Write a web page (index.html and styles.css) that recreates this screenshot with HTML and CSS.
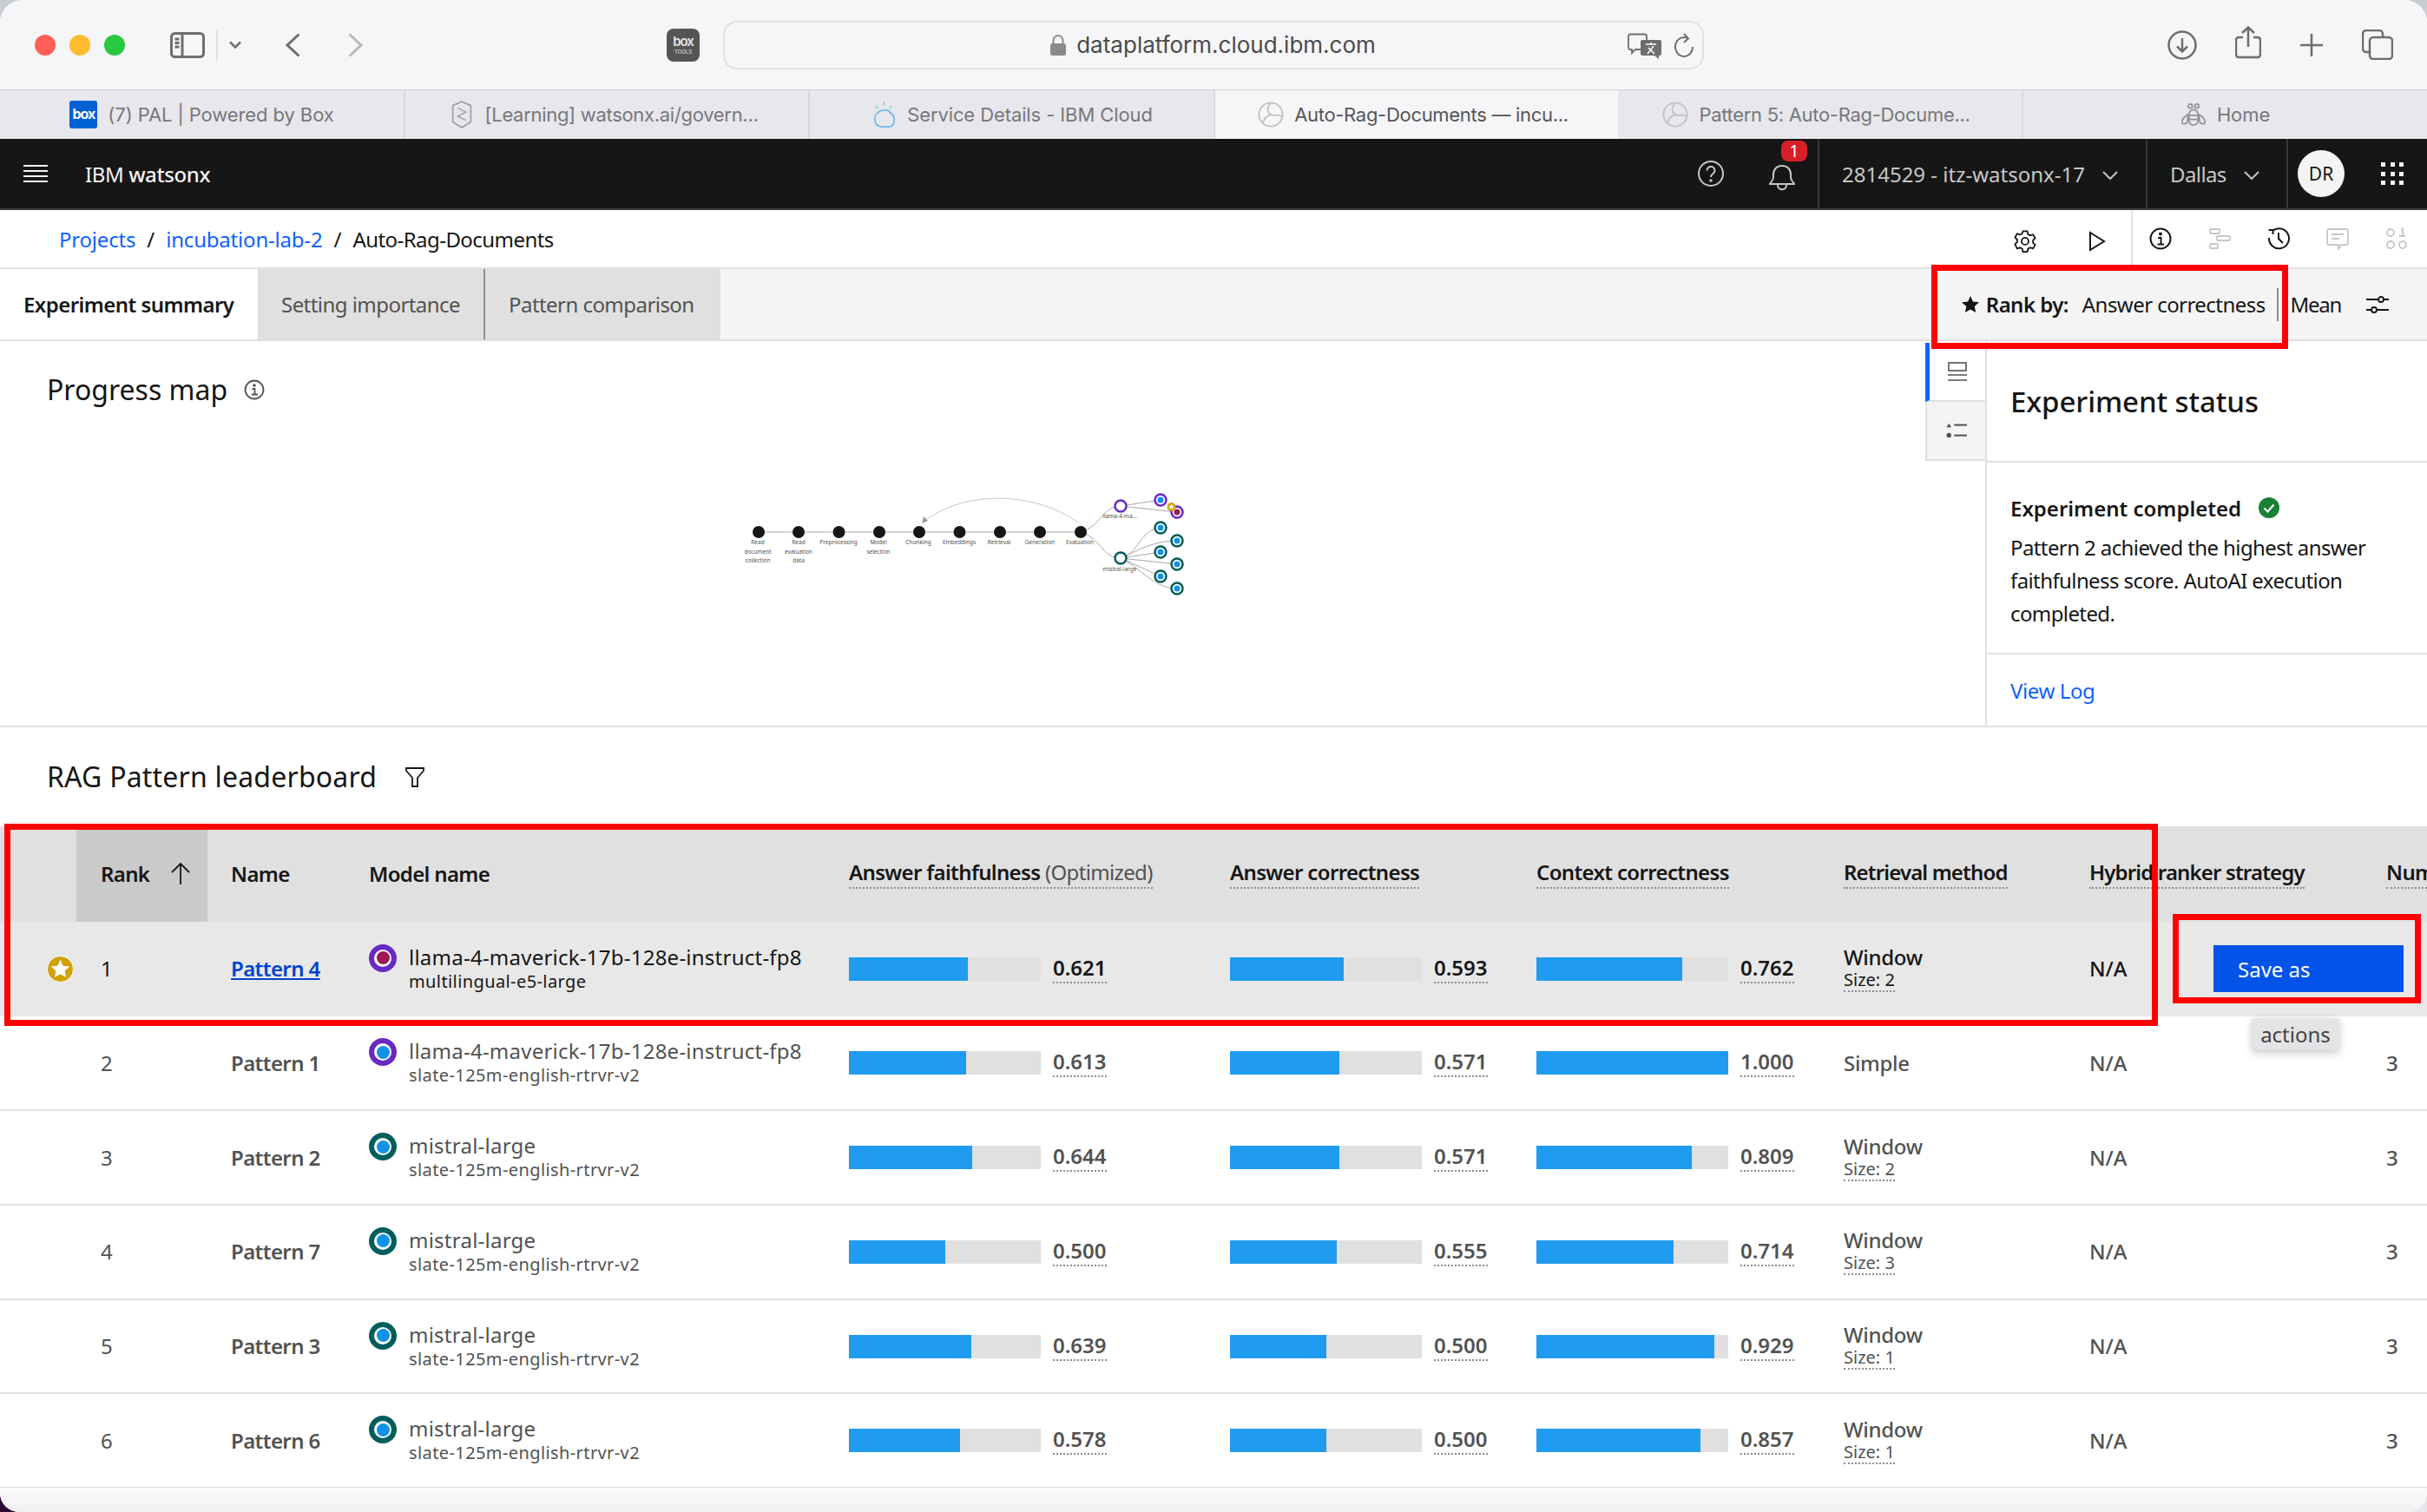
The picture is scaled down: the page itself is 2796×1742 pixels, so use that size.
FILE: index.html
```html
<!DOCTYPE html>
<html lang="en">
<head>
    <meta charset="UTF-8">
    <title>Auto-Rag-Documents</title>
    <link rel="stylesheet" href="styles.css">
</head>
<body>
<div class="window">
    <!-- browser toolbar -->
    <div class="toolbar">
        <div class="lights"><i class="red"></i><i class="amber"></i><i class="green"></i></div>
        <svg class="ic-sidebar" viewBox="0 0 40 30" fill="none" stroke="#6e6e70" stroke-width="3"><rect x="1.5" y="1.5" width="37" height="27" rx="4"/><path d="M14 2v26M5.5 8h5M5.5 12.500h5M5.500 17h5"/></svg>
        <div class="tool-sep"></div>
        <svg class="ic-drop" viewBox="0 0 14 10" fill="none" stroke="#6e6e70" stroke-width="2.500"><path d="M1 1.500l6 6 6-6"/></svg>
        <svg class="ic-back" viewBox="0 0 17 28" fill="none" stroke="#6e6e70" stroke-width="3"><path d="M15.500 1.500L2 14l13.500 12.500"/></svg>
        <svg class="ic-fwd" viewBox="0 0 17 28" fill="none" stroke="#b9b9bb" stroke-width="3"><path d="M1.500 1.500L15 14 1.500 26.500"/></svg>
        <div class="boxtools"><b>box</b><span>TOOLS</span></div>
        <div class="urlbar">
            <svg class="ic-lock" viewBox="0 0 20 24"><path d="M4.500 10V6.500a5.500 5.500 0 0 1 11 0V10" fill="none" stroke="#8a8a8c" stroke-width="2"/><rect x="1" y="10" width="18" height="14" rx="2.500" fill="#8a8a8c"/></svg>
            <span class="url">dataplatform.cloud.ibm.com</span>
            <svg class="ic-translate" viewBox="0 0 40 30"><path d="M3 1.500h17a2 2 0 0 1 2 2V17a2 2 0 0 1-2 2H9l-4 4v-4H3a2 2 0 0 1-2-2V3.500a2 2 0 0 1 2-2z" fill="#f6f6f8" stroke="#6e6e70" stroke-width="1.800"/><path d="M17 8h20a2 2 0 0 1 2 2v14a2 2 0 0 1-2 2h-1v4l-5-4H17a2 2 0 0 1-2-2V10a2 2 0 0 1 2-2z" fill="#6e6e70"/><path d="M21 13h12M27 11v2M23 24l7-9M31 24l-7-7" stroke="#fff" stroke-width="1.500" fill="none"/></svg>
            <svg class="ic-reload" viewBox="0 0 24 30" fill="none" stroke="#6e6e70" stroke-width="2"><path d="M17 6.500A10 11 0 1 0 22 16"/><path d="M12 1l5 5.500L12 11"/></svg>
        </div>
        <div class="tool-right">
            <svg class="ic-tool" viewBox="0 0 34 34" fill="none" stroke="#6e6e70" stroke-width="2.500"><circle cx="17" cy="17" r="15.500"/><path d="M17 9v15M11 18.500l6 6 6-6"/></svg>
            <svg class="ic-share" viewBox="0 0 30 38" fill="none" stroke="#6e6e70" stroke-width="2.500"><path d="M9 13H4a3 3 0 0 0-3 3v17a3 3 0 0 0 3 3h22a3 3 0 0 0 3-3V16a3 3 0 0 0-3-3h-5"/><path d="M15 24V2M8 8l7-6.500L22 8"/></svg>
            <svg class="ic-plus" viewBox="0 0 28 28" fill="none" stroke="#6e6e70" stroke-width="2.500"><path d="M14 1v26M1 14h26"/></svg>
            <svg class="ic-tabs" viewBox="0 0 36 35" fill="none" stroke="#6e6e70" stroke-width="2.500"><path d="M8 26H5a4 4 0 0 1-4-4V5a4 4 0 0 1 4-4h15a4 4 0 0 1 4 4v3"/><rect x="9" y="9" width="26" height="25" rx="4"/></svg>
        </div>
    </div>

    <!-- browser tabs -->
    <div class="tabstrip">
        <div class="btab"><span class="fav-box">box</span>(7) PAL | Powered by Box</div>
        <div class="btab tight">
            <svg class="fav" viewBox="0 0 26 34" fill="none" stroke="#9aa0a6" stroke-width="1.800"><path d="M13 1l11 5v20l-11 7-11-7V6z"/><path d="M8 9l10 5-10 5 10 5" stroke-width="1.500"/></svg>
            [Learning] watsonx.ai/govern...</div>
        <div class="btab">
            <svg class="fav" viewBox="0 0 32 34" fill="none" stroke="#6fb6ee" stroke-width="1.800"><path d="M10 14c-7 3-7 18 4 18h8c9 0 9-14 2-17-1-3-4-4-7-3-2-1-5 0-7 2z" /><path d="M16 1v5M6 6l3 4M26 6l-3 4" stroke="#7fdcdc"/></svg>
            Service Details - IBM Cloud</div>
        <div class="btab active tight">
            <svg class="fav" viewBox="0 0 32 32" fill="none" stroke="#c2c2c4" stroke-width="2"><circle cx="16" cy="16" r="14.500"/><path d="M16 2c-6 6-4 11 0 14M30 18c-8-3-12 0-14-2M6 27c2-7 6-10 10-11" /></svg>
            Auto-Rag-Documents — incu...</div>
        <div class="btab tight">
            <svg class="fav" viewBox="0 0 32 32" fill="none" stroke="#c2c2c4" stroke-width="2"><circle cx="16" cy="16" r="14.500"/><path d="M16 2c-6 6-4 11 0 14M30 18c-8-3-12 0-14-2M6 27c2-7 6-10 10-11" /></svg>
            Pattern 5: Auto-Rag-Docume...</div>
        <div class="btab">
            <svg class="fav" viewBox="0 0 32 28" fill="none" stroke="#8d929c" stroke-width="1.800"><circle cx="12" cy="3.500" r="2.500"/><circle cx="20" cy="3.500" r="2.500"/><rect x="10.500" y="8" width="11" height="19" rx="5.500"/><path d="M11 15h10M11 20h10M9 14c-4 2-7 6-7 9 0 3 4 3 6 1 1-3 1-7 1-10zM23 14c4 2 7 6 7 9 0 3-4 3-6 1-1-3-1-7-1-10z"/></svg>
            Home</div>
    </div>

    <!-- product header -->
    <header class="topbar">
        <svg class="ic-menu" viewBox="0 0 28 22" fill="none" stroke="#f4f4f4" stroke-width="2"><path d="M0 2h28M0 8h28M0 14h28M0 20h28" /></svg>
        <div class="brand">IBM <b>watsonx</b></div>
        <div class="top-icons">
            <svg class="ic-help" viewBox="0 0 30 30" fill="none" stroke="#c6c6c6" stroke-width="2"><circle cx="15" cy="15" r="14"/><path d="M10.500 11.500c0-6 9-6 9 0 0 4-4.500 3.500-4.500 7.500"/><circle cx="15" cy="23" r=".8" fill="#c6c6c6"/></svg>
            <div class="bell">
                <svg class="ic-bell" viewBox="0 0 30 32" fill="none" stroke="#c6c6c6" stroke-width="2"><path d="M1 24c0-2 4-3 4-8V13C5 7 9 3 15 3s10 4 10 10v3c0 5 4 6 4 8z"/><path d="M10 25c0 7 10 7 10 0"/></svg>
                <span class="badge">1</span>
            </div>
        </div>
        <div class="top-cell account">2814529 - itz-watsonx-17
            <svg class="ic-chev" viewBox="0 0 18 10" fill="none" stroke="#c6c6c6" stroke-width="2"><path d="M1 1l8 8 8-8"/></svg></div>
        <div class="top-cell region"><span>Dallas</span>
            <svg class="ic-chev" viewBox="0 0 18 10" fill="none" stroke="#c6c6c6" stroke-width="2"><path d="M1 1l8 8 8-8"/></svg></div>
        <div class="top-cell user">
            <div class="avatar">DR</div>
            <div class="grid-ic"><i></i><i></i><i></i><i></i><i></i><i></i><i></i><i></i><i></i></div>
        </div>
    </header>

    <!-- breadcrumb row -->
    <div class="crumbs">
        <div class="crumb-links"><a>Projects</a><span>/</span><a>incubation-lab-2</a><span>/</span><em>Auto-Rag-Documents</em></div>
        <div class="crumb-actions">
            <svg class="ic-act" viewBox="0 0 26 26" fill="none" stroke="#161616" stroke-width="1.800"><path d="M10.500 1.500h5l.8 3.500 2.500 1.400 3.400-1 2.400 4.200-2.500 2.400v2.900l2.500 2.400-2.400 4.200-3.400-1-2.500 1.400-.8 3.500h-5l-.8-3.500-2.500-1.400-3.400 1L1.400 16.500l2.500-2.400v-2.900L1.400 8.800l2.400-4.200 3.400 1 2.500-1.400z" transform="translate(0 -.2)"/><circle cx="13" cy="12.900" r="4"/></svg>
            <svg class="ic-act play" viewBox="0 0 20 24" fill="none" stroke="#161616" stroke-width="2"><path d="M2 2l16 10L2 22z"/></svg>
        </div>
        <div class="crumb-panel">
            <svg class="ic-act" viewBox="0 0 26 26" fill="none" stroke="#161616" stroke-width="2"><circle cx="13" cy="13" r="11.500"/><path d="M10 12h3.500v7M9.500 19.500h7.500"/><circle cx="13" cy="7.500" r="1" fill="#161616"/></svg>
            <svg class="ic-act" viewBox="0 0 26 26" fill="none" stroke="#c6c6c6" stroke-width="1.800"><rect x="2" y="2" width="11" height="5" rx="1"/><rect x="10" y="10" width="15" height="5" rx="1"/><rect x="2" y="19" width="9" height="5" rx="1"/></svg>
            <svg class="ic-act" viewBox="0 0 26 26" fill="none" stroke="#161616" stroke-width="2"><path d="M6 4a11.500 11.500 0 1 1-4 8"/><path d="M1.500 3h5v5M13 6v7l5 5"/></svg>
            <svg class="ic-act" viewBox="0 0 26 26" fill="none" stroke="#c6c6c6" stroke-width="1.800"><path d="M3 2h20a2 2 0 0 1 2 2v14a2 2 0 0 1-2 2h-6l-3 5v-5H3a2 2 0 0 1-2-2V4a2 2 0 0 1 2-2zM6 8h14M6 13h9"/></svg>
            <svg class="ic-act" viewBox="0 0 26 26" fill="none" stroke="#c6c6c6" stroke-width="1.800"><circle cx="6" cy="6" r="4"/><path d="M18 2l2-.5V10M16 10h7"/><circle cx="6" cy="20" r="4"/><circle cx="20" cy="20" r="4"/></svg>
        </div>
    </div>

    <!-- page tabs -->
    <div class="tabs">
        <div class="tab selected">Experiment summary</div>
        <div class="tab">Setting importance</div>
        <div class="tab">Pattern comparison</div>
        <div class="rank-by">
            <svg class="ic-star" viewBox="0 0 20 20" fill="#161616"><path d="M10 0l2.900 6.500 7.100.8-5.300 4.700 1.500 7L10 15.400 3.800 19l1.500-7L0 7.300l7.100-.8z"/></svg>
            <b>Rank by:</b><span class="rank-metric">Answer correctness</span><span class="rank-mean">Mean</span>
            <svg class="ic-sliders" viewBox="0 0 26 22" fill="none" stroke="#161616" stroke-width="1.800"><path d="M0 5h14M20 5h6M0 17h6M12 17h14"/><circle cx="17" cy="5" r="3"/><circle cx="9" cy="17" r="3"/></svg>
        </div>
    </div>

    <!-- progress map + status panel -->
    <section class="overview">
        <div class="map">
            <div class="map-title">Progress map
                <svg class="ic-info" viewBox="0 0 24 24" fill="none" stroke="#525252" stroke-width="1.800"><circle cx="12" cy="12" r="10.500"/><path d="M9.500 11h3v6.500M9 17.500h7"/><circle cx="12" cy="7" r=".9" fill="#525252"/></svg>
            </div>
            <svg class="diagram" width="520" height="130" viewBox="849 560 520 130">
                <path class="edge" d="M874 613H1245"/>
                <path class="edge" d="M1245 613C1268 607 1270 583 1291 583M1245 613C1268 620 1270 643 1291 643"/>
                <path class="edge" d="M1291 583L1337 576M1291 583L1356 590M1291 643C1310 640 1315 608 1337 608M1291 643C1315 632 1330 623 1356 623M1291 643L1337 636M1291 643L1356 650M1291 643L1337 664M1291 643C1315 655 1330 678 1356 678"/>
                <path class="arc" d="M1242 602C1190 565 1110 565 1064 601"/>
                <path d="M1062 603l2-8 5 5z" fill="#9a9a9a"/>
                <g fill="#161616">
                    <circle cx="874" cy="613" r="7"/><circle cx="920" cy="613" r="7"/><circle cx="966.500" cy="613" r="7"/>
                    <circle cx="1013" cy="613" r="7"/><circle cx="1059" cy="613" r="7"/><circle cx="1105.500" cy="613" r="7"/>
                    <circle cx="1152" cy="613" r="7"/><circle cx="1198" cy="613" r="7"/><circle cx="1245" cy="613" r="7"/>
                </g>
                <g class="map-label">
                    <text x="873" y="627">Read</text><text x="873" y="638">document</text><text x="873" y="648">collection</text>
                    <text x="920" y="627">Read</text><text x="920" y="638">evaluation</text><text x="920" y="648">data</text>
                    <text x="966" y="627">Preprocessing</text>
                    <text x="1012" y="627">Model</text><text x="1012" y="638">selection</text>
                    <text x="1058" y="627">Chunking</text>
                    <text x="1105" y="627">Embeddings</text>
                    <text x="1151" y="627">Retrieval</text>
                    <text x="1198" y="627">Generation</text>
                    <text x="1244" y="627">Evaluation</text>
                    <text x="1290" y="597">llama-4-ma...</text>
                    <text x="1290" y="658">mistral-large</text>
                </g>
                <circle class="n-purple" cx="1291" cy="583" r="6.500"/>
                <circle class="n-teal" cx="1291" cy="643" r="6.500"/>
                <g class="leaf-purple">
                    <circle cx="1337" cy="576" r="6.500"/><circle cx="1356" cy="590" r="6.500"/>
                </g>
                <g class="leaf-teal">
                    <circle cx="1337" cy="608" r="6.500"/><circle cx="1356" cy="623" r="6.500"/><circle cx="1337" cy="636" r="6.500"/>
                    <circle cx="1356" cy="650" r="6.500"/><circle cx="1337" cy="664" r="6.500"/><circle cx="1356" cy="678" r="6.500"/>
                </g>
                <g fill="#1192e8">
                    <circle cx="1337" cy="576" r="3.500"/><circle cx="1337" cy="608" r="3.500"/><circle cx="1356" cy="623" r="3.500"/>
                    <circle cx="1337" cy="636" r="3.500"/><circle cx="1356" cy="650" r="3.500"/><circle cx="1337" cy="664" r="3.500"/>
                    <circle cx="1356" cy="678" r="3.500"/>
                </g>
                <circle cx="1356" cy="590" r="3.500" fill="#9f1853"/>
                <circle cx="1349.500" cy="584" r="5" fill="#d2a106"/>
                <path d="M1349.500 580.500l1 2.200 2.400.2-1.800 1.600.6 2.400-2.200-1.300-2.200 1.300.6-2.400-1.800-1.600 2.400-.2z" fill="#fff"/>
            </svg>
        </div>
        <div class="sidetabs">
            <div class="stab on">
                <svg viewBox="0 0 22 22" fill="none" stroke="#525252" stroke-width="1.600"><rect x="1" y="1" width="20" height="9"/><path d="M0 15h22M0 21h22"/></svg>
            </div>
            <div class="stab">
                <svg viewBox="0 0 26 20" fill="#525252"><path d="M3.500 1l3 5h-6z"/><circle cx="3.500" cy="16" r="3"/><rect x="10" y="2" width="16" height="2.200"/><rect x="10" y="15" width="16" height="2.200"/></svg>
            </div>
        </div>
        <aside class="status">
            <h2>Experiment status</h2>
            <div class="status-body">
                <div class="status-head">Experiment completed
                    <svg class="ic-ok" viewBox="0 0 24 24"><circle cx="12" cy="12" r="12" fill="#198038"/><path d="M6.500 12.500l4 4 7-8" fill="none" stroke="#fff" stroke-width="2.200"/></svg>
                </div>
                <p>Pattern 2 achieved the highest answer faithfulness score. AutoAI execution completed.</p>
            </div>
            <a class="view-log">View Log</a>
        </aside>
    </section>

    <!-- leaderboard -->
    <section class="board">
        <div class="board-title">RAG Pattern leaderboard
            <svg class="ic-filter" viewBox="0 0 22 24" fill="none" stroke="#161616" stroke-width="1.800"><path d="M1 1h20v3l-7 8v10H8V12L1 4z"/></svg>
        </div>
        <div class="table-wrap">
            <table class="lb">
                <colgroup>
                    <col class="c-star"><col class="c-rank"><col class="c-name"><col class="c-model"><col class="c-af"><col class="c-ac"><col class="c-cc"><col class="c-ret"><col class="c-hyb"><col class="c-num">
                </colgroup>
                <thead>
                    <tr>
                        <th></th>
                        <th class="sorted">Rank
                            <svg class="ic-up" viewBox="0 0 24 26" fill="none" stroke="#161616" stroke-width="1.800"><path d="M12 26V2M2 12L12 2l10 10"/></svg></th>
                        <th>Name</th>
                        <th>Model name</th>
                        <th><span class="dot">Answer faithfulness <i>(Optimized)</i></span></th>
                        <th><span class="dot">Answer correctness</span></th>
                        <th><span class="dot">Context correctness</span></th>
                        <th class="snug"><span class="dot">Retrieval method</span></th>
                        <th class="snug"><span class="dot">Hybrid ranker strategy</span></th>
                        <th><span class="dot">Num</span></th>
                    </tr>
                </thead>
                <tbody>
                    <tr class="hover">
                        <td><svg class="ic-medal" viewBox="0 0 32 32"><circle cx="16" cy="16" r="15.500" fill="#d2a106" stroke="#fff"/><path d="M16 5l3.300 7.200 7.700.8-5.800 5.200 1.700 7.700-6.900-4-6.900 4 1.700-7.700L5 13l7.700-.8z" fill="#fff"/></svg></td>
                        <td>1</td>
                        <td><a class="pattern">Pattern 4</a></td>
                        <td><div class="model"><span class="ring purple crimson"></span><div>llama-4-maverick-17b-128e-instruct-fp8<small>multilingual-e5-large</small></div></div></td>
                        <td><div class="score"><div class="bar"><div style="width:62.1%"></div></div><b>0.621</b></div></td>
                        <td><div class="score"><div class="bar"><div style="width:59.3%"></div></div><b>0.593</b></div></td>
                        <td><div class="score"><div class="bar"><div style="width:76.2%"></div></div><b>0.762</b></div></td>
                        <td class="ret">Window<small class="dot">Size: 2</small></td>
                        <td class="na">N/A</td>
                        <td>
                            <button class="save">Save as</button>
                            <div class="tip">actions</div>
                        </td>
                    </tr>
                    <tr>
                        <td></td>
                        <td>2</td>
                        <td class="pname">Pattern 1</td>
                        <td><div class="model"><span class="ring purple"></span><div>llama-4-maverick-17b-128e-instruct-fp8<small>slate-125m-english-rtrvr-v2</small></div></div></td>
                        <td><div class="score"><div class="bar"><div style="width:61.3%"></div></div><b>0.613</b></div></td>
                        <td><div class="score"><div class="bar"><div style="width:57.1%"></div></div><b>0.571</b></div></td>
                        <td><div class="score"><div class="bar"><div style="width:100%"></div></div><b>1.000</b></div></td>
                        <td class="ret">Simple</td>
                        <td class="na">N/A</td>
                        <td class="na">3</td>
                    </tr>
                    <tr>
                        <td></td>
                        <td>3</td>
                        <td class="pname">Pattern 2</td>
                        <td><div class="model"><span class="ring"></span><div>mistral-large<small>slate-125m-english-rtrvr-v2</small></div></div></td>
                        <td><div class="score"><div class="bar"><div style="width:64.4%"></div></div><b>0.644</b></div></td>
                        <td><div class="score"><div class="bar"><div style="width:57.1%"></div></div><b>0.571</b></div></td>
                        <td><div class="score"><div class="bar"><div style="width:80.9%"></div></div><b>0.809</b></div></td>
                        <td class="ret">Window<small class="dot">Size: 2</small></td>
                        <td class="na">N/A</td>
                        <td class="na">3</td>
                    </tr>
                    <tr>
                        <td></td>
                        <td>4</td>
                        <td class="pname">Pattern 7</td>
                        <td><div class="model"><span class="ring"></span><div>mistral-large<small>slate-125m-english-rtrvr-v2</small></div></div></td>
                        <td><div class="score"><div class="bar"><div style="width:50%"></div></div><b>0.500</b></div></td>
                        <td><div class="score"><div class="bar"><div style="width:55.5%"></div></div><b>0.555</b></div></td>
                        <td><div class="score"><div class="bar"><div style="width:71.4%"></div></div><b>0.714</b></div></td>
                        <td class="ret">Window<small class="dot">Size: 3</small></td>
                        <td class="na">N/A</td>
                        <td class="na">3</td>
                    </tr>
                    <tr>
                        <td></td>
                        <td>5</td>
                        <td class="pname">Pattern 3</td>
                        <td><div class="model"><span class="ring"></span><div>mistral-large<small>slate-125m-english-rtrvr-v2</small></div></div></td>
                        <td><div class="score"><div class="bar"><div style="width:63.9%"></div></div><b>0.639</b></div></td>
                        <td><div class="score"><div class="bar"><div style="width:50%"></div></div><b>0.500</b></div></td>
                        <td><div class="score"><div class="bar"><div style="width:92.9%"></div></div><b>0.929</b></div></td>
                        <td class="ret">Window<small class="dot">Size: 1</small></td>
                        <td class="na">N/A</td>
                        <td class="na">3</td>
                    </tr>
                    <tr>
                        <td></td>
                        <td>6</td>
                        <td class="pname">Pattern 6</td>
                        <td><div class="model"><span class="ring"></span><div>mistral-large<small>slate-125m-english-rtrvr-v2</small></div></div></td>
                        <td><div class="score"><div class="bar"><div style="width:57.8%"></div></div><b>0.578</b></div></td>
                        <td><div class="score"><div class="bar"><div style="width:50%"></div></div><b>0.500</b></div></td>
                        <td><div class="score"><div class="bar"><div style="width:85.7%"></div></div><b>0.857</b></div></td>
                        <td class="ret">Window<small class="dot">Size: 1</small></td>
                        <td class="na">N/A</td>
                        <td class="na">3</td>
                    </tr>
                </tbody>
            </table>
        </div>
    </section>
    <div class="window-foot"></div>

    <!-- red annotation boxes drawn over the page -->
    <div class="mark mark-rank"></div>
    <div class="mark mark-row"></div>
    <div class="mark mark-save"></div>
</div>
</body>
</html>
```

FILE: styles.css
```css
:root {
    --plex: "Noto Sans", Roboto, Arial, sans-serif;
    --safari: Inter, "Liberation Sans", Arial, sans-serif;
    --ink: #161616;
    --muted: #525252;
    --line: #e0e0e0;
    --blue: #0f62fe;
    --bar: #1f9bf0;
}

* { box-sizing: border-box; }

html, body {
    margin: 0;
    height: 100%;
}

body {
    background: linear-gradient(90deg, #2b0b33 50%, #e6e6ea 50%) bottom / 100% 50% no-repeat, #c9cdd2;
    font-family: var(--plex);
    color: var(--ink);
    overflow: hidden;
}

svg { display: block; flex: none; }

.window {
    position: relative;
    width: 2796px;
    height: 1742px;
    display: flex;
    flex-direction: column;
    background: #fff;
    border-radius: 26px 26px 22px 22px;
    overflow: hidden;
}

/* browser toolbar */
.toolbar {
    height: 104px;
    flex: none;
    display: flex;
    align-items: center;
    padding: 0 39px 0 40px;
    background: #f6f6f8;
    border-bottom: 1px solid #cfcfd2;
    font-family: var(--safari);
}
.lights { display: flex; gap: 16px; }
.lights i { width: 24px; height: 24px; border-radius: 50%; }
.lights .red { background: #ff5f57; }
.lights .amber { background: #febc2e; }
.lights .green { background: #28c840; }
.ic-sidebar { width: 40px; height: 30px; margin-left: 52px; }
.tool-sep { width: 2px; height: 36px; background: #e2e2e4; margin-left: 13px; }
.ic-drop { width: 14px; height: 10px; margin-left: 13px; }
.ic-back { width: 17px; height: 28px; margin-left: 51px; }
.ic-fwd { width: 17px; height: 28px; margin-left: 55px; }
.boxtools {
    width: 38px;
    height: 38px;
    margin-left: 350px;
    border-radius: 8px;
    background: #555;
    color: #e8e8e8;
    display: flex;
    flex-direction: column;
    align-items: center;
    justify-content: center;
    line-height: 1;
}
.boxtools b { font-size: 15px; font-weight: 600; letter-spacing: -1px; }
.boxtools span { font-size: 6px; margin-top: 2px; }
.urlbar {
    width: 1130px;
    height: 56px;
    margin-left: 27px;
    position: relative;
    display: flex;
    align-items: center;
    justify-content: center;
    gap: 11px;
    border: 2px solid #e2e2e4;
    border-radius: 16px;
    padding-right: 2px;
    font-size: 26px;
    color: #4a4a4c;
}
.ic-lock { width: 20px; height: 24px; }
.ic-translate { position: absolute; right: 46px; top: 12px; width: 40px; height: 30px; }
.ic-reload { position: absolute; right: 9px; top: 12px; width: 24px; height: 30px; }
.tool-right {
    margin-left: auto;
    display: flex;
    align-items: center;
    gap: 44px;
}
.ic-tool { width: 34px; height: 34px; }
.ic-share { width: 30px; height: 38px; margin-top: -6px; }
.ic-plus { width: 28px; height: 28px; }
.ic-tabs { width: 36px; height: 35px; }

/* browser tabs */
.tabstrip {
    height: 56px;
    flex: none;
    display: grid;
    grid-template-columns: 467px 466px 467px 464px 467px 1fr;
    background: #e7e7ec;
    font-family: var(--safari);
    font-size: 22px;
    letter-spacing: -.1px;
    color: #77777b;
}
.btab {
    display: flex;
    align-items: center;
    justify-content: center;
    gap: 12px;
    border-right: 2px solid #d9d9dd;
    white-space: nowrap;
}
.btab.tight { letter-spacing: -.3px; padding-right: 8px; }
.btab:last-child { border-right: 0; }
.btab.active { background: #f6f6f8; color: #55555a; border-right: 0; }
.fav { width: 30px; height: 32px; }
.fav-box {
    width: 32px;
    height: 32px;
    border-radius: 3px;
    background: #0061d5;
    color: #fff;
    font-size: 16px;
    font-weight: 700;
    letter-spacing: -1px;
    text-align: center;
    line-height: 30px;
}

/* product header */
.topbar {
    height: 82px;
    flex: none;
    display: flex;
    align-items: stretch;
    background: #161616;
    border-bottom: 2px solid #393939;
    color: #c6c6c6;
    font-size: 24px;
}
.ic-menu { width: 28px; height: 22px; margin: 29px 0 0 27px; }
.brand {
    margin-left: 43px;
    align-self: center;
    color: #f4f4f4;
    letter-spacing: -.4px;
}
.brand b { font-weight: 500; }
.top-icons {
    margin-left: auto;
    display: flex;
    align-items: center;
    gap: 52px;
    padding-right: 26px;
}
.ic-help { width: 30px; height: 30px; }
.bell { position: relative; }
.ic-bell { width: 30px; height: 32px; margin-top: 8px; }
.badge {
    position: absolute;
    top: -18px;
    left: 14px;
    width: 30px;
    height: 24px;
    border-radius: 8px;
    background: #da1e28;
    color: #fff;
    font-size: 20px;
    line-height: 24px;
    text-align: center;
}
.top-cell {
    display: flex;
    align-items: center;
    border-left: 2px solid #393939;
}
.account { width: 378px; padding-left: 26px; gap: 20px; }
.region { width: 162px; padding-left: 26px; gap: 20px; }
.region span { letter-spacing: -.6px; }
.user { width: 162px; padding-left: 11px; }
.ic-chev { width: 18px; height: 10px; margin-top: 3px; }
.avatar {
    width: 54px;
    height: 54px;
    border-radius: 50%;
    background: #f4f4f4;
    color: #161616;
    font-size: 21px;
    line-height: 54px;
    text-align: center;
}
.grid-ic {
    margin-left: 42px;
    display: grid;
    grid-template-columns: repeat(3, 5px);
    gap: 5.500px;
}
.grid-ic i { height: 5px; background: #f4f4f4; }

/* breadcrumb row */
.crumbs {
    height: 66px;
    flex: none;
    display: flex;
    align-items: stretch;
    padding-left: 68px;
    font-size: 24px;
}
.crumb-links {
    display: flex;
    align-items: center;
    gap: 13px;
}
.crumb-links a { color: var(--blue); letter-spacing: -.2px; }
.crumb-links em { font-style: normal; letter-spacing: -.55px; }
.crumb-actions {
    margin-left: auto;
    display: flex;
    align-items: center;
    gap: 60px;
    padding: 6px 29px 0 0;
}
.crumb-panel {
    width: 341px;
    display: flex;
    align-items: center;
    gap: 42px;
    padding-left: 19px;
    border-left: 2px solid var(--line);
}
.ic-act { width: 26px; height: 26px; }
.play { width: 20px; height: 24px; }

/* page tabs */
.tabs {
    height: 85px;
    flex: none;
    display: flex;
    background: #f4f4f4;
    border-top: 2px solid var(--line);
    border-bottom: 2px solid var(--line);
    font-size: 24px;
    letter-spacing: -.55px;
}
.tab {
    width: 262px;
    padding-left: 27px;
    line-height: 82px;
    background: var(--line);
    color: var(--muted);
    border-right: 2px solid #8d8d8d;
}
.tab:nth-child(3) { width: 271px; border-right: 0; }
.tab.selected {
    width: 297px;
    background: #fff;
    color: var(--ink);
    font-weight: 600;
    border-right: 0;
}
.rank-by {
    margin-left: auto;
    display: flex;
    align-items: center;
    padding-right: 44px;
}
.ic-star { width: 20px; height: 20px; margin-right: 8px; }
.rank-by b { font-weight: 600; }
.rank-metric {
    margin-left: 16px;
    padding-right: 13px;
    border-right: 2px solid #8d8d8d;
    line-height: 38px;
}
.rank-mean { margin-left: 14px; letter-spacing: -1.300px; }
.ic-sliders { width: 26px; height: 22px; margin-left: 29px; }

/* progress map + status */
.overview {
    height: 445px;
    flex: none;
    display: flex;
    border-bottom: 2px solid var(--line);
}
.map {
    flex: 1;
    display: flex;
    flex-direction: column;
    align-items: center;
}
.map-title {
    align-self: flex-start;
    display: flex;
    align-items: center;
    gap: 19px;
    margin: 37px 0 0 54px;
    font-size: 32px;
    line-height: 38px;
}
.ic-info { width: 24px; height: 24px; }
.diagram { margin-top: 92px; }
.edge { fill: none; stroke: #a8a8a8; stroke-width: 1; }
.arc { fill: none; stroke: #c6c6c6; stroke-width: 1; }
.map-label { font-size: 6.500px; fill: #525252; text-anchor: middle; }
.n-purple { fill: #fff; stroke: #6929c4; stroke-width: 2.500; }
.n-teal { fill: #fff; stroke: #005d5d; stroke-width: 2.500; }
.leaf-purple circle { fill: #fff; stroke: #6929c4; stroke-width: 2.500; }
.leaf-teal circle { fill: #fff; stroke: #005d5d; stroke-width: 2.500; }
.sidetabs { width: 69px; flex: none; padding-top: 2px; }
.stab {
    height: 68px;
    display: flex;
    align-items: center;
    justify-content: center;
    background: #f4f4f4;
    border: 2px solid var(--line);
    border-right: 0;
    border-top: 0;
}
.stab svg { width: 24px; height: 22px; }
.stab.on {
    background: #fff;
    border-left: 5px solid var(--blue);
    border-bottom: 2px solid var(--line);
}
.status {
    width: 509px;
    flex: none;
    border-left: 2px solid var(--line);
    font-size: 24px;
}
.status h2 {
    height: 140px;
    margin: 0;
    padding: 50px 0 0 27px;
    font-size: 33px;
    font-weight: 500;
    line-height: 40px;
    letter-spacing: -.1px;
    border-bottom: 2px solid var(--line);
}
.status-body {
    height: 221px;
    padding: 35px 20px 0 27px;
    border-bottom: 2px solid var(--line);
}
.status-head {
    display: flex;
    align-items: center;
    gap: 20px;
    font-weight: 600;
    line-height: 36px;
}
.ic-ok { width: 24px; height: 24px; margin-top: -3px; }
.status p {
    margin: 8px 0 0;
    line-height: 38px;
    letter-spacing: -.6px;
}
.view-log {
    display: block;
    padding: 24px 0 0 27px;
    color: var(--blue);
    line-height: 36px;
    letter-spacing: -.4px;
}

/* leaderboard */
.board {
    height: 876px;
    flex: none;
}
.board-title {
    height: 114px;
    display: flex;
    align-items: center;
    gap: 33px;
    padding: 0 0 2px 54px;
    font-size: 32px;
    letter-spacing: .2px;
}
.ic-filter { width: 22px; height: 24px; margin-top: 4px; }
.table-wrap { overflow: hidden; }
.lb {
    width: 2842px;
    table-layout: fixed;
    border-collapse: collapse;
    font-size: 24px;
    line-height: 30px;
    color: var(--muted);
}
.c-star { width: 88px; }
.c-rank { width: 151px; }
.c-name { width: 159px; }
.c-model { width: 553px; }
.c-af { width: 439px; }
.c-ac { width: 353px; }
.c-cc { width: 354px; }
.c-ret { width: 283px; }
.c-hyb { width: 342px; }
.c-num { width: 120px; }

.lb th {
    height: 110px;
    padding: 0 0 0 27px;
    background: var(--line);
    color: var(--ink);
    font-weight: 600;
    letter-spacing: -.65px;
    text-align: left;
    white-space: nowrap;
}
.lb th.sorted { background: #cacaca; padding-left: 28px; }
.lb th.snug { letter-spacing: -.85px; }
.ic-up { display: inline-block; width: 24px; height: 26px; margin-left: 18px; vertical-align: -3px; }
.dot {
    padding-bottom: 2px;
    border-bottom: 2px dotted #8d8d8d;
}
.lb th .dot { display: inline-block; line-height: 30px; }
.lb th i { font-style: normal; font-weight: 400; color: var(--muted); }

.lb td {
    height: 108.700px;
    padding: 0 0 0 27px;
    border-bottom: 2px solid var(--line);
    white-space: nowrap;
}
.lb td:nth-child(1) { padding-left: 54px; }
.lb td:nth-child(2) { padding-left: 28px; }
.lb tr.hover { position: relative; }
.lb tr.hover td {
    background: #e8e8e8;
    color: var(--ink);
    border-bottom: 0;
}
.ic-medal { width: 31px; height: 31px; }
.pattern {
    color: #0043ce;
    font-weight: 600;
    letter-spacing: -.6px;
    text-decoration: underline;
}
.pname { font-weight: 600; letter-spacing: -.6px; }
.na { font-weight: 500; }
.ret { color: var(--muted); font-weight: 500; line-height: 28px; letter-spacing: -.3px; }
.hover .ret { color: var(--ink); }
.ret small {
    display: table;
    font-size: 20px;
    font-weight: 400;
    line-height: 24px;
    letter-spacing: 0;
}
.model {
    display: flex;
    gap: 14px;
    align-items: flex-start;
    margin-top: -1px;
    letter-spacing: .24px;
}
.model small {
    display: block;
    font-size: 20px;
    line-height: 26px;
    letter-spacing: .4px;
}
.model > div { line-height: 30px; }
.ring {
    width: 32px;
    height: 32px;
    flex: none;
    border: 6px solid #005d5d;
    border-radius: 50%;
    background: #fff;
    display: flex;
    align-items: center;
    justify-content: center;
}
.ring::after {
    content: "";
    width: 15px;
    height: 15px;
    border-radius: 50%;
    background: #1192e8;
}
.ring.purple { border-color: #6929c4; }
.ring.crimson::after { background: #9f1853; }

.score {
    display: flex;
    align-items: center;
    gap: 14px;
}
.bar {
    width: 221px;
    height: 27px;
    flex: none;
    background: var(--line);
}
.bar div { height: 100%; background: var(--bar); }
.score b {
    font-weight: 600;
    padding-bottom: 1px;
    border-bottom: 2px dotted #8d8d8d;
}

.save {
    position: absolute;
    left: 2550px;
    top: 27px;
    width: 219px;
    height: 54px;
    padding: 0 0 0 28px;
    border: 0;
    background: #0353e9;
    color: #fff;
    font: 24px var(--plex);
    text-align: left;
}
.tip {
    position: absolute;
    left: 2594px;
    top: 111px;
    z-index: 2;
    width: 101px;
    height: 37px;
    border-radius: 3px;
    background: #e4e4e6;
    box-shadow: 0 3px 10px rgba(0, 0, 0, .22);
    color: #444;
    font-size: 24px;
    line-height: 37px;
    text-align: center;
}

.window-foot {
    flex: 1;
    background: linear-gradient(#fafafa, #f1f1f1);
}

/* red annotation boxes */
.mark {
    position: absolute;
    border: 7px solid #ff0000;
    z-index: 3;
}
.mark-rank { left: 2225px; top: 305px; width: 411px; height: 97px; }
.mark-row { left: 5px; top: 949px; width: 2481px; height: 233px; }
.mark-save { left: 2503px; top: 1053px; width: 286px; height: 103px; }
```
